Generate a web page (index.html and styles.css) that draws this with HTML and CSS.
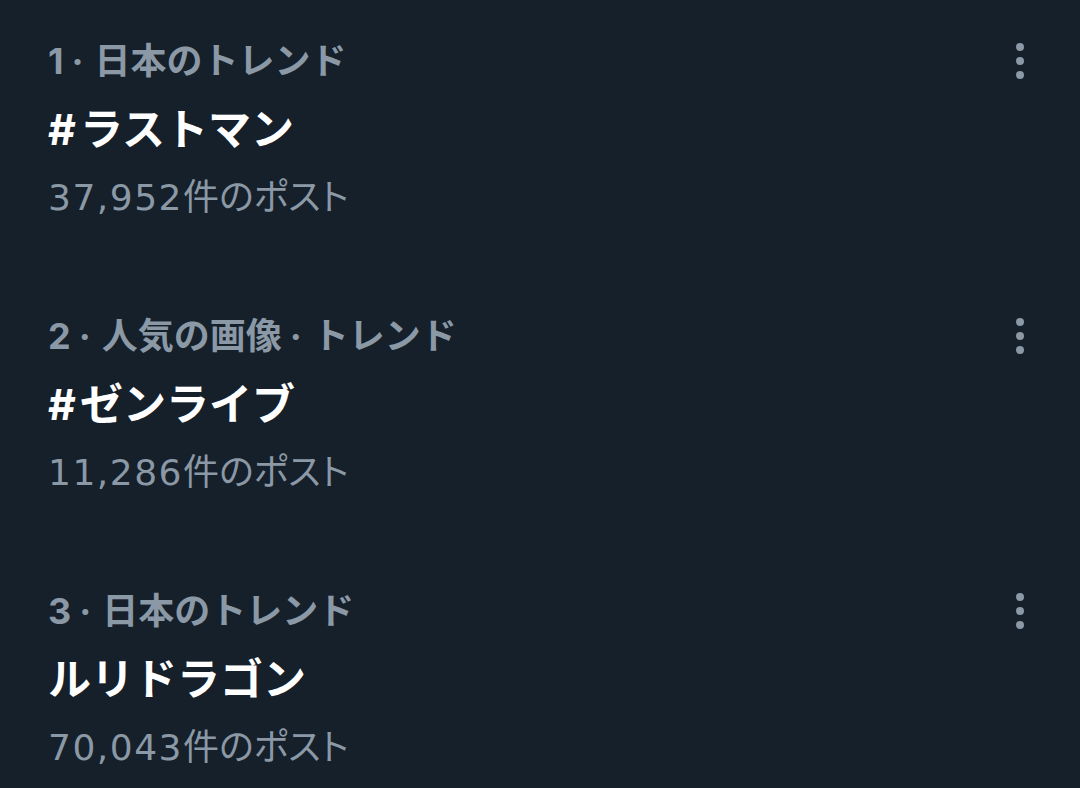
FILE: index.html
```html
<!DOCTYPE html>
<html lang="ja">
<head>
    <meta charset="UTF-8">
    <meta name="viewport" content="width=device-width, initial-scale=1.0">
    <title>トレンド</title>
    <link rel="stylesheet" href="styles.css">
</head>
<body>
    <ul class="trends">
        <li class="trend">
            <div class="trend-text">
                <div class="trend-meta">1<span class="sep">·</span>日本のトレンド</div>
                <div class="trend-name"><span class="hash">#</span>ラストマン</div>
                <div class="trend-count"><span class="num">37,952</span>件のポスト</div>
            </div>
            <button class="more-button" aria-label="もっと見る">
                <svg viewBox="0 0 12 36" width="12" height="36"><circle cx="6" cy="4" r="4"/><circle cx="6" cy="18" r="4"/><circle cx="6" cy="32" r="4"/></svg>
            </button>
        </li>
        <li class="trend">
            <div class="trend-text">
                <div class="trend-meta">2<span class="sep">·</span>人気の画像<span class="sep">·</span>トレンド</div>
                <div class="trend-name"><span class="hash">#</span>ゼンライブ</div>
                <div class="trend-count"><span class="num">11,286</span>件のポスト</div>
            </div>
            <button class="more-button" aria-label="もっと見る">
                <svg viewBox="0 0 12 36" width="12" height="36"><circle cx="6" cy="4" r="4"/><circle cx="6" cy="18" r="4"/><circle cx="6" cy="32" r="4"/></svg>
            </button>
        </li>
        <li class="trend">
            <div class="trend-text">
                <div class="trend-meta">3<span class="sep">·</span>日本のトレンド</div>
                <div class="trend-name">ルリドラゴン</div>
                <div class="trend-count"><span class="num">70,043</span>件のポスト</div>
            </div>
            <button class="more-button" aria-label="もっと見る">
                <svg viewBox="0 0 12 36" width="12" height="36"><circle cx="6" cy="4" r="4"/><circle cx="6" cy="18" r="4"/><circle cx="6" cy="32" r="4"/></svg>
            </button>
        </li>
    </ul>
</body>
</html>
```

FILE: styles.css
```css
body {
    margin: 0;
    background: #15202b;
    font-family: Inter, "Noto Sans CJK JP", sans-serif;
    height: 100vh;
    overflow: hidden;
}

.trends {
    list-style: none;
    margin: 0;
    padding: 27px 0 0 48px;
}

.trend {
    display: flex;
    justify-content: space-between;
    align-items: flex-start;
    margin-bottom: 70px;
}

.trend:last-child {
    margin-bottom: 0;
}

.trend-meta {
    color: #8b98a5;
    font-size: 36px;
    font-weight: bold;
    line-height: 68px;
}

.trend-meta .sep {
    margin: 0 11px 0 8px;
}

.trend-name {
    color: #ffffff;
    font-size: 43px;
    font-weight: bold;
    line-height: 68px;
}

.trend-name .hash {
    margin-right: 4px;
}

.trend-count {
    color: #8b98a5;
    font-size: 36px;
    line-height: 68px;
    font-feature-settings: "palt";
}

.trend-count .num {
    font-family: "DejaVu Sans", sans-serif;
    letter-spacing: 1.5px;
}

.more-button {
    background: none;
    border: none;
    padding: 0;
    margin: 16px 54px 0 0;
    fill: #8b98a5;
    cursor: pointer;
}

.more-button svg {
    display: block;
}
```
